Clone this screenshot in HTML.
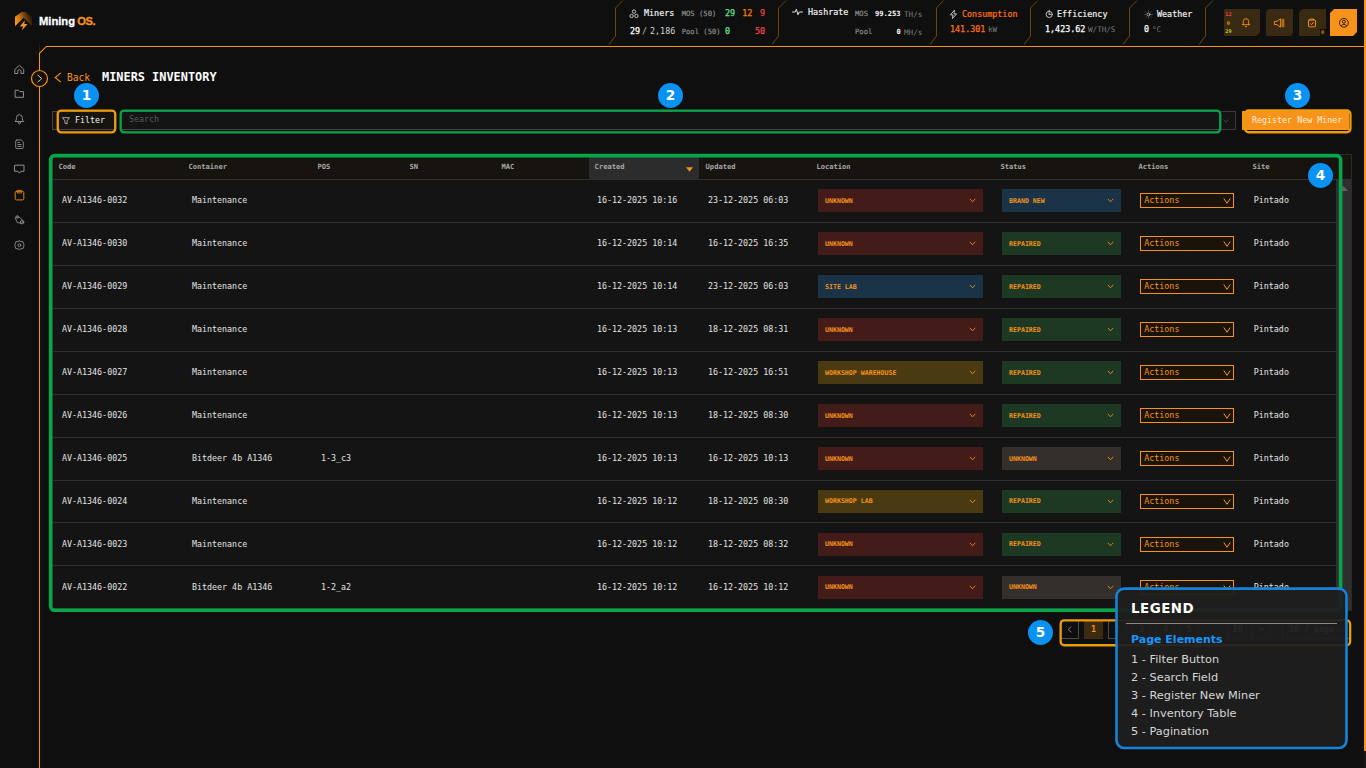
<!DOCTYPE html>
<html lang="en">
<head>
<meta charset="utf-8">
<title>Mining OS - Miners Inventory</title>
<style>
*{box-sizing:border-box;margin:0;padding:0}
html,body{width:1366px;height:768px;overflow:hidden;background:#0f0f0f}
body{position:relative;font-family:"DejaVu Sans Mono","Liberation Mono",monospace;color:#fff;font-size:8.33px;line-height:1}
.abs{position:absolute}
svg{display:block;overflow:visible}
#frame{position:absolute;left:0;top:0;width:1366px;height:768px;pointer-events:none}
.t{position:absolute;white-space:pre;line-height:10px}
.logo-t{position:absolute;left:39px;top:13px;font-family:"Liberation Sans","DejaVu Sans",sans-serif;font-weight:bold;font-size:11.2px;line-height:16px;letter-spacing:0;word-spacing:-0.9px;color:#fff;white-space:pre;-webkit-text-stroke:0.3px}
.logo-t i{font-style:normal;color:#f7931a;letter-spacing:-0.4px}
.hl{font-size:8.4px;color:#f0f0f0;-webkit-text-stroke:0.2px}
.hv{font-size:8.4px;color:#fff;-webkit-text-stroke:0.25px}
.hs{font-size:7.2px;color:#8a8a8a;-webkit-text-stroke:0.2px}
.hu{font-size:7.6px;color:#7d7d7d}
.hb{font-size:7.1px;font-weight:bold;color:#fff}
.g{color:#5fe38c}.o{color:#ff7a00}.r{color:#ef4444}
.ibtn{position:absolute;top:9px;height:27px;background:#3a2913}
.side svg{position:absolute;left:13px;width:12px;height:12px;fill:none;stroke:#b8b8b8;stroke-width:1.1;stroke-linecap:round;stroke-linejoin:round}
.title{position:absolute;left:102px;top:69px;font-size:11.9px;line-height:16px;font-weight:bold;color:#fff;white-space:pre}
.back{position:absolute;left:67px;top:71px;font-size:9.6px;line-height:14px;color:#f7931a;white-space:pre}
.badge{position:absolute;width:25px;height:25px;border-radius:50%;background:#0992f2;color:#fff;font-family:"DejaVu Sans","Liberation Sans",sans-serif;font-weight:bold;font-size:13.6px;line-height:25px;text-align:center}
.ann{position:absolute;border:2px solid #ef9c0a;border-radius:4px}
.ann.gr{border-color:#0aa94e}
.fbtn{position:absolute;left:52px;top:111px;width:63px;height:19px;border:1px solid #444;background:#17130e}
.search{position:absolute;left:120px;top:111px;width:1116px;height:19px;border:1px solid #444;background:#141414}
.reg{position:absolute;left:1242px;top:111px;width:106.5px;height:19px;background:#f7931a}
#tbl{position:absolute;left:0;top:0;width:1366px;height:620px;clip-path:inset(154px 14px 9px 52px)}
.tbg{position:absolute;left:52px;top:154px;width:1300px;height:457px;background:#141414;border:1px solid #2a2a2a}
.th{position:absolute;left:53px;top:155px;width:1298px;height:25px;background:#17130f;border-bottom:1px solid #303030}
.th span{position:absolute;top:8px;font-size:7.1px;line-height:8px;font-weight:bold;color:#a8a8a8;white-space:pre}
.row{position:absolute;left:0;width:1336px;height:43px}
.sep{position:absolute;left:53px;width:1283px;height:1px;background:#2e2e2e}
.c{position:absolute;top:15px;line-height:10px;font-size:8.33px;color:#e4e4e4;white-space:pre}
.sel{position:absolute;top:9px;height:23px}
.sel b{position:absolute;left:7px;top:7px;font-size:6.6px;line-height:8px;font-weight:bold;color:#f7931a;white-space:pre}
.cv{position:absolute;width:7px;height:5px;fill:none;stroke:#f7931a;stroke-width:1;right:7px;top:9px}
.loc{left:818px;width:165px}
.st{left:1002px;width:119px}
.unk{background:#431c1a}.lab{background:#1a3347}.wh{background:#4a3a12}
.new{background:#1a3347}.rep{background:#1d3823}.sunk{background:#352f2b}
.act{position:absolute;left:1140px;top:13px;width:94px;height:15px;border:1px solid #f7931a;background:#1a130a}
.act span{position:absolute;left:3.3px;top:1px;font-size:8.33px;line-height:10px;color:#f7931a}
.act .cv{right:2.5px;top:3.5px;width:8px;height:6px}
.pg{position:absolute;top:620px;width:19px;height:19px;border:1px solid #4a4a4a;color:#e0e0e0;font-size:8.33px;line-height:17px;text-align:center;white-space:pre}
#legend{position:absolute;left:1116px;top:587px;width:232px;height:163px;border:2px solid transparent;font-family:"DejaVu Sans","Liberation Sans",sans-serif}
#legend h3{position:absolute;left:13px;top:12px;font-size:13.4px;line-height:16px;font-weight:bold;color:#fff;letter-spacing:0.5px}
#legend hr{position:absolute;left:8px;top:34px;width:211px;border:0;border-top:1px solid #8a8a8a}
#legend h4{position:absolute;left:13px;top:44px;font-size:11px;line-height:14px;font-weight:bold;color:#1896fa}
#legend p{position:absolute;left:13px;font-size:11.33px;line-height:14px;color:#d6d6d6;white-space:pre}
</style>
</head>
<body>
<svg id="frame" viewBox="0 0 1366 768">
<path d="M39.5 768 V53.3 L46.4 46.5 H1364" fill="none" stroke="#f7931a" stroke-width="1.05"/>
<rect x="1364" y="0" width="2" height="751" fill="#f7931a"/>
<rect x="1364" y="751" width="2" height="17" fill="#1a1512"/>
<path d="M39.5 44.5 V52" stroke="#2a1d0c" stroke-width="1" fill="none"/>
<g fill="none" stroke="#6b4412" stroke-width="1">
<path d="M623 0.5 L615.5 8 V36 L609 44.5"/>
<path d="M786 0.5 L778.5 8 V36 L772 44.5"/>
<path d="M943.5 0.5 L936.5 8 V36 L930 44.5"/>
<path d="M1038 0.5 L1030.5 8 V36 L1024 44.5"/>
<path d="M1137 0.5 L1129.5 8 V36 L1123 44.5"/>
<path d="M1213 0.5 L1205.5 8 V36 L1199 44.5"/>
</g>
</svg>

<!-- logo -->
<svg class="abs" style="left:14px;top:11px;width:19px;height:20px" viewBox="0 0 19 20">
<defs><linearGradient id="lg" x1="0" y1="0.65" x2="1" y2="0.35"><stop offset="0" stop-color="#f7931a"/><stop offset="0.3" stop-color="#cf7811"/><stop offset="0.65" stop-color="#6a3d0c"/><stop offset="1" stop-color="#1e1309"/></linearGradient></defs>
<path d="M1 5.8 L7.6 1.1 Q9.5 0.2 11.4 1.1 L18 5.8 V14.8 L9.5 6.8 L1 15.2 Z" fill="url(#lg)"/>
<path d="M10.8 9.2 L5.8 15.4 H9.1 L7.8 19.6 L13.6 13 H10.3 Z" fill="#f7931a"/>
</svg>
<div class="logo-t">Mining <i>OS.</i></div>

<!-- header stats -->
<svg class="abs" style="left:629px;top:9px;width:10px;height:10px" viewBox="0 0 10 10" fill="none" stroke="#d0d0d0" stroke-width="0.9"><circle cx="5" cy="2.6" r="1.7"/><circle cx="2.6" cy="7" r="1.7"/><circle cx="7.4" cy="7" r="1.7"/></svg>
<span class="t hl" style="left:644px;top:8px">Miners</span>
<span class="t hs" style="left:681.7px;top:9px">MOS (50)</span>
<span class="t hv g" style="left:725px;top:8px">29</span>
<span class="t hv o" style="left:742.3px;top:8px">12</span>
<span class="t hv r" style="left:760px;top:8px">9</span>
<span class="t hv" style="left:630px;top:26px">29</span><span class="t" style="left:642px;top:26px;font-size:8.4px;color:#c4c4c4">/</span><span class="t" style="left:650px;top:26px;font-size:8.4px;color:#d4d4d4">2,186</span>
<span class="t hs" style="left:681.7px;top:27px">Pool (50)</span>
<span class="t hv g" style="left:725px;top:26px">0</span>
<span class="t hv r" style="left:755px;top:26px">50</span>

<svg class="abs" style="left:792px;top:8px;width:11px;height:8px" viewBox="0 0 11 8" fill="none" stroke="#e0e0e0" stroke-width="1" stroke-linejoin="round" stroke-linecap="round"><path d="M0.5 4 H3.2 L4.4 1.2 L6 6.8 L7.2 4 H10.5"/></svg>
<span class="t hl" style="left:808px;top:7px">Hashrate</span>
<span class="t hs" style="left:855px;top:9px">MOS</span>
<span class="t hb" style="left:875px;top:9px">99.253</span>
<span class="t hu" style="left:904px;top:10px">TH/s</span>
<span class="t hs" style="left:855px;top:27px">Pool</span>
<span class="t hb" style="left:896.5px;top:27px">0</span>
<span class="t hu" style="left:904px;top:28px">MH/s</span>

<svg class="abs" style="left:949px;top:9px;width:9px;height:11px" viewBox="0 0 9 11" fill="none" stroke="#d0d0d0" stroke-width="0.9" stroke-linejoin="round"><path d="M5.4 1.2 L1.4 5.9 H4 L3.4 9.6 L7.6 4.9 H5 Z"/></svg>
<span class="t hl" style="left:962px;top:9px;color:#ff6f0f">Consumption</span>
<span class="t hv" style="left:950px;top:24px;color:#ff6f0f">141.301</span>
<span class="t hu" style="left:988px;top:25px">kW</span>

<svg class="abs" style="left:1045px;top:9px;width:9px;height:10px" viewBox="0 0 9 10" fill="none" stroke="#d0d0d0" stroke-width="0.9" stroke-linecap="round"><circle cx="4.2" cy="5.4" r="3.1"/><path d="M4.2 5.4 V3.6 M4.2 5.4 H5.6 M4.2 2.3 V1.2"/></svg>
<span class="t hl" style="left:1057px;top:9px">Efficiency</span>
<span class="t hv" style="left:1045px;top:24px">1,423.62</span>
<span class="t hu" style="left:1088px;top:25px">W/TH/S</span>

<svg class="abs" style="left:1144px;top:9.5px;width:9px;height:9px" viewBox="0 0 9 9" fill="none" stroke-linecap="round"><circle cx="4.5" cy="4.5" r="1.5" stroke="#c8c8c8" stroke-width="0.8"/><path stroke="#8a8a8a" stroke-width="0.7" d="M4.5 0.8V1.2M4.5 7.8V8.2M0.8 4.5H1.2M7.8 4.5H8.2M1.9 1.9L2.1 2.1M6.9 6.9L7.1 7.1M1.9 7.1L2.1 6.9M6.9 2.1L7.1 1.9"/></svg>
<span class="t hl" style="left:1157px;top:9px">Weather</span>
<span class="t hv" style="left:1144px;top:24px">0</span>
<span class="t hu" style="left:1152px;top:25px">°C</span>

<!-- header buttons -->
<div class="ibtn" style="left:1224px;width:36px;background:#1c140b"></div>
<div class="ibtn" style="left:1224px;width:36px;clip-path:polygon(0 0,100% 0,100% 23px,32px 100%,0 100%)"></div>
<span class="t" style="left:1225.3px;top:10px;font-size:5.2px;line-height:8px;font-weight:bold;color:#ef4444">12</span>
<span class="t" style="left:1226.8px;top:19px;font-size:5.2px;line-height:8px;font-weight:bold;color:#f59e0b">0</span>
<span class="t" style="left:1225.3px;top:27px;font-size:5.2px;line-height:8px;font-weight:bold;color:#c8d020">29</span>
<svg class="abs" style="left:1241px;top:17px;width:10px;height:11px" viewBox="0 0 10 11" fill="none" stroke="#f7931a" stroke-width="0.9" stroke-linecap="round" stroke-linejoin="round"><path d="M1.4 7.7 H8.6 M2.3 7.7 V4.4 A2.7 2.7 0 0 1 7.7 4.4 V7.7 M4.1 9.3 L5 10.1 L5.9 9.3"/></svg>
<div class="ibtn" style="left:1266px;width:27px;background:#1c140b"></div>
<div class="ibtn" style="left:1266px;width:27px;clip-path:polygon(3px 0,100% 0,100% 24px,24px 100%,0 100%,0 3px)"></div>
<svg class="abs" style="left:1274px;top:18px;width:11px;height:10px" viewBox="0 0 11 10" fill="none" stroke="#f7931a" stroke-width="0.9" stroke-linejoin="round" stroke-linecap="round"><path d="M0.8 3.4 H3 L6.6 0.8 V9.2 L3 6.6 H0.8 Z M8.2 1.2 V8.8 M9.8 1.2 V8.8"/></svg>
<div class="ibtn" style="left:1299px;width:27px;background:#1c140b"></div>
<div class="ibtn" style="left:1299px;width:27px;clip-path:polygon(4px 0,100% 0,100% 100%,0 100%,0 4px)"></div>
<svg class="abs" style="left:1307px;top:17px;width:11px;height:11px" viewBox="0 0 11 11" fill="none" stroke="#f7931a" stroke-width="0.95" stroke-linejoin="round" stroke-linecap="round"><rect x="1.5" y="3" width="7" height="6.8" rx="0.6"/><path d="M3.2 3 V2.1 H6.8 V3 M3.6 6.8 L4.6 7.6 L6.4 5.4"/></svg>
<div class="abs" style="left:1320px;top:29px;width:6px;height:7px;background:#1a1208"></div>
<span class="t" style="left:1321px;top:28px;font-size:5.2px;line-height:8px;font-weight:bold;color:#c89020">0</span>
<div class="ibtn" style="left:1330px;width:27px;background:#f7931a;clip-path:polygon(4px 0,100% 0,100% 23px,23px 100%,0 100%,0 4px)"></div>
<svg class="abs" style="left:1338px;top:17px;width:12px;height:12px" viewBox="0 0 12 12" fill="none" stroke="#1a1208" stroke-width="0.9"><circle cx="5.9" cy="5.8" r="4.4"/><circle cx="5.9" cy="4.7" r="1.5"/><path d="M3.1 9.1 Q5.9 5.6 8.7 9.1"/></svg>
<!-- sidebar -->
<svg class="abs" style="left:0;top:60px;width:40px;height:200px" viewBox="0 60 40 200" fill="none" stroke="#8e8e8e" stroke-width="1" stroke-linejoin="round" stroke-linecap="round">
<path d="M15.1 69.2 L19.4 65.3 L23.7 69.2 V73.5 H21 V71.2 A1.6 1.6 0 0 0 17.8 71.2 V73.5 H15.1 Z"/>
<path d="M15.5 90.3 H18.6 L19.8 91.6 H23.5 V97.3 H15.5 Z"/>
<path d="M15.3 121.3 Q16.5 120.4 16.5 118.6 V117.6 A2.9 2.9 0 0 1 22.3 117.6 V118.6 Q22.3 120.4 23.5 121.3 Z"/><circle cx="19.4" cy="122.7" r="1.1"/>
<path d="M16.9 140 H21.4 L23.3 141.9 V147.4 Q23.3 148.6 22.1 148.6 H16.9 Q15.7 148.6 15.7 147.4 V141.2 Q15.7 140 16.9 140 Z M17.8 142.5 H19.6 M17.8 144.5 H21.2 M17.8 146.4 H21.2" stroke-width="0.9"/>
<path d="M14.9 165.2 H24 V171.3 H20.9 L19.4 173.2 L17.9 171.3 H14.9 Z"/>
<g stroke="#e8830f"><rect x="15.2" y="191.3" width="8.6" height="8.6" rx="1.2"/><path d="M17.6 191.3 V190.4 H21.4 V191.3 V192.9 H17.6 Z" stroke-width="0.9"/></g>
<g stroke-width="0.9"><path d="M15.4 217.2 L17.4 215.4 L23.2 220.8 L21.8 223.4 L17.6 222.6 Z"/><circle cx="17.3" cy="217.5" r="0.8"/><circle cx="22.1" cy="222.2" r="1.7"/></g>
<g stroke-width="0.9"><circle cx="19.4" cy="245.2" r="1.4"/><path d="M19.4 240.7 L20.9 241.7 L22.9 241.6 L23.5 243.4 L24 245.2 L23.5 247 L22.9 248.8 L20.9 248.7 L19.4 249.7 L17.9 248.7 L15.9 248.8 L15.3 247 L14.8 245.2 L15.3 243.4 L15.9 241.6 L17.9 241.7 Z"/></g>
</svg>

<!-- collapse toggle -->
<svg class="abs" style="left:31px;top:70px;width:17px;height:17px" viewBox="0 0 17 17"><circle cx="8.5" cy="8.5" r="8" fill="#17120c" stroke="#f7931a" stroke-width="1.2"/><path d="M6.6 5 L10.8 8.6 L6.6 12.2" fill="none" stroke="#c8c8c8" stroke-width="1"/></svg>

<!-- title -->
<svg class="abs" style="left:54px;top:72px;width:8px;height:11px" viewBox="0 0 8 11"><path d="M6.8 0.8 L1.2 5.5 L6.8 10.2" fill="none" stroke="#f7931a" stroke-width="1.1"/></svg>
<div class="back">Back</div>
<div class="title">MINERS INVENTORY</div>

<!-- filter / search / register -->
<div class="fbtn"></div>
<svg class="abs" style="left:62px;top:117px;width:8px;height:8px" viewBox="0 0 8 8" fill="none" stroke="#d8d8d8" stroke-width="0.75" stroke-linejoin="round"><path d="M0.5 0.7 H7.5 L5.1 3.8 V7 L2.9 6.2 V3.8 Z"/></svg>
<span class="t" style="left:75px;top:115px;font-size:8.33px;color:#f0f0f0">Filter</span>
<div class="search"></div>
<span class="t" style="left:129px;top:114px;font-size:8.33px;color:#5a5a5a">Search</span>
<div class="abs" style="left:1220px;top:111px;width:16px;height:19px;border:1px solid #3a3a3a;border-left:0"></div>
<svg class="abs" style="left:1223px;top:119px;width:6px;height:4px" viewBox="0 0 6 4"><path d="M0.5 0.5 L3 3.2 L5.5 0.5" fill="none" stroke="#4a4a4a" stroke-width="0.9"/></svg>
<div class="reg"></div>

<!-- table -->
<div id="tbl">
<div class="tbg"></div>
<div class="th">
<div class="abs" style="left:536px;top:0;width:110px;height:24px;background:#2c2c2c"></div>
<span style="left:5.5px">Code</span><span style="left:135.5px">Container</span><span style="left:264.5px">POS</span><span style="left:356.5px">SN</span><span style="left:448.5px">MAC</span><span style="left:541.6px">Created</span><span style="left:652.6px">Updated</span><span style="left:763.4px">Location</span><span style="left:947.5px">Status</span><span style="left:1085.5px">Actions</span><span style="left:1199.5px">Site</span>
<svg class="abs" style="left:633px;top:12px;width:7px;height:5px" viewBox="0 0 8 5"><path d="M0 0 H8 L4 5 Z" fill="#f7931a"/></svg>
</div>
<div class="abs" style="left:1336px;top:180px;width:15px;height:430px;background:#2f2f2f"></div>
<svg class="abs" style="left:1339px;top:186px;width:9px;height:5px" viewBox="0 0 9 5"><path d="M0 5 L4.5 0 L9 5 Z" fill="#606060"/></svg>
<div class="row" style="top:180px">
<span class="c" style="left:62px">AV-A1346-0032</span><span class="c" style="left:192px">Maintenance</span><span class="c" style="left:321px"></span><span class="c" style="left:597px">16-12-2025 10:16</span><span class="c" style="left:708px">23-12-2025 06:03</span>
<div class="sel loc unk"><b style="top:8px">UNKNOWN</b><svg class="cv" viewBox="0 0 8 6"><path d="M0.8 1 L4 4.6 L7.2 1"/></svg></div><div class="sel st new"><b style="top:8px">BRAND NEW</b><svg class="cv" viewBox="0 0 8 6"><path d="M0.8 1 L4 4.6 L7.2 1"/></svg></div><div class="act"><span>Actions</span><svg class="cv" viewBox="0 0 8 6"><path d="M0.8 0.5 L4 5.3 L7.2 0.5"/></svg></div><span class="c" style="left:1253.8px">Pintado</span>
</div><div class="sep" style="top:222px"></div>
<div class="row" style="top:223px">
<span class="c" style="left:62px">AV-A1346-0030</span><span class="c" style="left:192px">Maintenance</span><span class="c" style="left:321px"></span><span class="c" style="left:597px">16-12-2025 10:14</span><span class="c" style="left:708px">16-12-2025 16:35</span>
<div class="sel loc unk"><b style="top:8px">UNKNOWN</b><svg class="cv" viewBox="0 0 8 6"><path d="M0.8 1 L4 4.6 L7.2 1"/></svg></div><div class="sel st rep"><b style="top:8px">REPAIRED</b><svg class="cv" viewBox="0 0 8 6"><path d="M0.8 1 L4 4.6 L7.2 1"/></svg></div><div class="act"><span>Actions</span><svg class="cv" viewBox="0 0 8 6"><path d="M0.8 0.5 L4 5.3 L7.2 0.5"/></svg></div><span class="c" style="left:1253.8px">Pintado</span>
</div><div class="sep" style="top:265px"></div>
<div class="row" style="top:266px">
<span class="c" style="left:62px">AV-A1346-0029</span><span class="c" style="left:192px">Maintenance</span><span class="c" style="left:321px"></span><span class="c" style="left:597px">16-12-2025 10:14</span><span class="c" style="left:708px">23-12-2025 06:03</span>
<div class="sel loc lab"><b style="top:8px">SITE LAB</b><svg class="cv" viewBox="0 0 8 6"><path d="M0.8 1 L4 4.6 L7.2 1"/></svg></div><div class="sel st rep"><b style="top:8px">REPAIRED</b><svg class="cv" viewBox="0 0 8 6"><path d="M0.8 1 L4 4.6 L7.2 1"/></svg></div><div class="act"><span>Actions</span><svg class="cv" viewBox="0 0 8 6"><path d="M0.8 0.5 L4 5.3 L7.2 0.5"/></svg></div><span class="c" style="left:1253.8px">Pintado</span>
</div><div class="sep" style="top:308px"></div>
<div class="row" style="top:309px">
<span class="c" style="left:62px">AV-A1346-0028</span><span class="c" style="left:192px">Maintenance</span><span class="c" style="left:321px"></span><span class="c" style="left:597px">16-12-2025 10:13</span><span class="c" style="left:708px">18-12-2025 08:31</span>
<div class="sel loc unk"><b style="top:8px">UNKNOWN</b><svg class="cv" viewBox="0 0 8 6"><path d="M0.8 1 L4 4.6 L7.2 1"/></svg></div><div class="sel st rep"><b style="top:8px">REPAIRED</b><svg class="cv" viewBox="0 0 8 6"><path d="M0.8 1 L4 4.6 L7.2 1"/></svg></div><div class="act"><span>Actions</span><svg class="cv" viewBox="0 0 8 6"><path d="M0.8 0.5 L4 5.3 L7.2 0.5"/></svg></div><span class="c" style="left:1253.8px">Pintado</span>
</div><div class="sep" style="top:351px"></div>
<div class="row" style="top:352px">
<span class="c" style="left:62px">AV-A1346-0027</span><span class="c" style="left:192px">Maintenance</span><span class="c" style="left:321px"></span><span class="c" style="left:597px">16-12-2025 10:13</span><span class="c" style="left:708px">16-12-2025 16:51</span>
<div class="sel loc wh"><b style="top:8px">WORKSHOP WAREHOUSE</b><svg class="cv" viewBox="0 0 8 6"><path d="M0.8 1 L4 4.6 L7.2 1"/></svg></div><div class="sel st rep"><b style="top:8px">REPAIRED</b><svg class="cv" viewBox="0 0 8 6"><path d="M0.8 1 L4 4.6 L7.2 1"/></svg></div><div class="act"><span>Actions</span><svg class="cv" viewBox="0 0 8 6"><path d="M0.8 0.5 L4 5.3 L7.2 0.5"/></svg></div><span class="c" style="left:1253.8px">Pintado</span>
</div><div class="sep" style="top:394px"></div>
<div class="row" style="top:395px">
<span class="c" style="left:62px">AV-A1346-0026</span><span class="c" style="left:192px">Maintenance</span><span class="c" style="left:321px"></span><span class="c" style="left:597px">16-12-2025 10:13</span><span class="c" style="left:708px">18-12-2025 08:30</span>
<div class="sel loc unk"><b style="top:8px">UNKNOWN</b><svg class="cv" viewBox="0 0 8 6"><path d="M0.8 1 L4 4.6 L7.2 1"/></svg></div><div class="sel st rep"><b style="top:8px">REPAIRED</b><svg class="cv" viewBox="0 0 8 6"><path d="M0.8 1 L4 4.6 L7.2 1"/></svg></div><div class="act"><span>Actions</span><svg class="cv" viewBox="0 0 8 6"><path d="M0.8 0.5 L4 5.3 L7.2 0.5"/></svg></div><span class="c" style="left:1253.8px">Pintado</span>
</div><div class="sep" style="top:437px"></div>
<div class="row" style="top:438px">
<span class="c" style="left:62px">AV-A1346-0025</span><span class="c" style="left:192px">Bitdeer 4b A1346</span><span class="c" style="left:321px">1-3_c3</span><span class="c" style="left:597px">16-12-2025 10:13</span><span class="c" style="left:708px">16-12-2025 10:13</span>
<div class="sel loc unk"><b style="top:8px">UNKNOWN</b><svg class="cv" viewBox="0 0 8 6"><path d="M0.8 1 L4 4.6 L7.2 1"/></svg></div><div class="sel st sunk"><b style="top:8px">UNKNOWN</b><svg class="cv" viewBox="0 0 8 6"><path d="M0.8 1 L4 4.6 L7.2 1"/></svg></div><div class="act"><span>Actions</span><svg class="cv" viewBox="0 0 8 6"><path d="M0.8 0.5 L4 5.3 L7.2 0.5"/></svg></div><span class="c" style="left:1253.8px">Pintado</span>
</div><div class="sep" style="top:480px"></div>
<div class="row" style="top:481px">
<span class="c" style="left:62px">AV-A1346-0024</span><span class="c" style="left:192px">Maintenance</span><span class="c" style="left:321px"></span><span class="c" style="left:597px">16-12-2025 10:12</span><span class="c" style="left:708px">18-12-2025 08:30</span>
<div class="sel loc wh"><b style="top:7px">WORKSHOP LAB</b><svg class="cv" viewBox="0 0 8 6"><path d="M0.8 1 L4 4.6 L7.2 1"/></svg></div><div class="sel st rep"><b style="top:7px">REPAIRED</b><svg class="cv" viewBox="0 0 8 6"><path d="M0.8 1 L4 4.6 L7.2 1"/></svg></div><div class="act"><span>Actions</span><svg class="cv" viewBox="0 0 8 6"><path d="M0.8 0.5 L4 5.3 L7.2 0.5"/></svg></div><span class="c" style="left:1253.8px">Pintado</span>
</div><div class="sep" style="top:522px"></div>
<div class="row" style="top:524px">
<span class="c" style="left:62px">AV-A1346-0023</span><span class="c" style="left:192px">Maintenance</span><span class="c" style="left:321px"></span><span class="c" style="left:597px">16-12-2025 10:12</span><span class="c" style="left:708px">18-12-2025 08:32</span>
<div class="sel loc unk"><b style="top:7px">UNKNOWN</b><svg class="cv" viewBox="0 0 8 6"><path d="M0.8 1 L4 4.6 L7.2 1"/></svg></div><div class="sel st rep"><b style="top:7px">REPAIRED</b><svg class="cv" viewBox="0 0 8 6"><path d="M0.8 1 L4 4.6 L7.2 1"/></svg></div><div class="act"><span>Actions</span><svg class="cv" viewBox="0 0 8 6"><path d="M0.8 0.5 L4 5.3 L7.2 0.5"/></svg></div><span class="c" style="left:1253.8px">Pintado</span>
</div><div class="sep" style="top:565px"></div>
<div class="row" style="top:567px">
<span class="c" style="left:62px">AV-A1346-0022</span><span class="c" style="left:192px">Bitdeer 4b A1346</span><span class="c" style="left:321px">1-2_a2</span><span class="c" style="left:597px">16-12-2025 10:12</span><span class="c" style="left:708px">16-12-2025 10:12</span>
<div class="sel loc unk"><b style="top:7px">UNKNOWN</b><svg class="cv" viewBox="0 0 8 6"><path d="M0.8 1 L4 4.6 L7.2 1"/></svg></div><div class="sel st sunk"><b style="top:7px">UNKNOWN</b><svg class="cv" viewBox="0 0 8 6"><path d="M0.8 1 L4 4.6 L7.2 1"/></svg></div><div class="act"><span>Actions</span><svg class="cv" viewBox="0 0 8 6"><path d="M0.8 0.5 L4 5.3 L7.2 0.5"/></svg></div><span class="c" style="left:1253.8px">Pintado</span>
</div><div class="sep" style="top:608px"></div></div>

<!-- pagination -->
<div class="pg" style="left:1060px"></div>
<svg class="abs" style="left:1067px;top:626px;width:5px;height:7px" viewBox="0 0 5 7"><path d="M4.4 0.5 L1 3.4 L4.4 6.3" fill="none" stroke="#808080" stroke-width="0.9"/></svg>
<div class="pg" style="left:1084px;background:#3d2a13;border-color:#3d2a13;color:#f7931a;font-weight:bold">1</div>
<div class="pg" style="left:1108px">2</div>
<div class="pg" style="left:1132px">3</div>
<div class="pg" style="left:1156px">4</div>
<div class="pg" style="left:1180px">5</div>
<div class="pg" style="left:1204px;border-color:transparent;color:#888">···</div>
<div class="pg" style="left:1228px">10</div>
<div class="pg" style="left:1252px">&gt;</div>
<div class="pg" style="left:1282px;width:68px;text-align:left;padding-left:6px">10 / page</div>
<svg class="abs" style="left:1338px;top:628px;width:6px;height:4px" viewBox="0 0 6 4"><path d="M0.5 0.5 L3 3.2 L5.5 0.5" fill="none" stroke="#aaa" stroke-width="0.9"/></svg>

<!-- annotations -->
<span class="t" style="left:1252px;top:115px;font-size:8.33px;color:#fdf0dc">Register New Miner</span>
<svg class="abs" style="left:0;top:0;width:1366px;height:768px" viewBox="0 0 1366 768" fill="none">
<rect x="50.6" y="155.6" width="1290" height="454.7" rx="4" stroke="#07a549" stroke-width="3.6"/>
<rect x="57.75" y="110.55" width="57.50" height="21.80" rx="3.5" stroke="#ef9c0a" stroke-width="2.3"/>
<rect x="120.65" y="110.55" width="1099.60" height="21.80" rx="3.5" stroke="#07a549" stroke-width="2.3"/>
<rect x="1245.05" y="110.45" width="105.40" height="21.80" rx="3.5" stroke="#ef9c0a" stroke-width="2.3"/>
<rect x="1060.65" y="620.45" width="289.50" height="24.80" rx="3.5" stroke="#ef9c0a" stroke-width="2.3"/>
</svg>

<div class="badge" style="left:74px;top:83px">1</div>
<div class="badge" style="left:658px;top:83px">2</div>
<div class="badge" style="left:1285px;top:83px">3</div>
<div class="badge" style="left:1308px;top:163px">4</div>
<div class="badge" style="left:1028px;top:620px">5</div>

<!-- legend -->
<svg class="abs" style="left:0;top:0;width:1366px;height:768px" viewBox="0 0 1366 768"><rect x="1116.5" y="588.6" width="230" height="159.4" rx="7.7" fill="rgba(31,31,31,0.95)" stroke="#1583d8" stroke-width="2.6"/></svg>
<div id="legend">
<h3>LEGEND</h3>
<hr>
<h4>Page Elements</h4>
<p style="top:63px">1 - Filter Button</p>
<p style="top:81px">2 - Search Field</p>
<p style="top:99px">3 - Register New Miner</p>
<p style="top:117px">4 - Inventory Table</p>
<p style="top:135px">5 - Pagination</p>
</div>
</body>
</html>
